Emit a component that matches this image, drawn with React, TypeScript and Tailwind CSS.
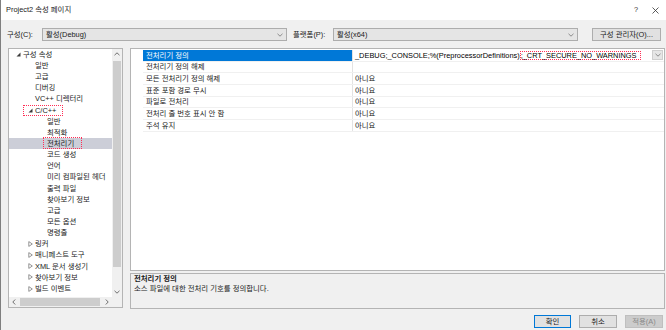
type TreeItem = {
  label: string;
  level: number;
  arrow?: 'open' | 'closed';
  selected?: boolean;
  box?: 'cpp' | 'pre';
};

const tree: TreeItem[] = [
  { label: '구성 속성', level: 0, arrow: 'open' },
  { label: '일반', level: 1 },
  { label: '고급', level: 1 },
  { label: '디버깅', level: 1 },
  { label: 'VC++ 디렉터리', level: 1 },
  { label: 'C/C++', level: 1, arrow: 'open', box: 'cpp' },
  { label: '일반', level: 2 },
  { label: '최적화', level: 2 },
  { label: '전처리기', level: 2, selected: true, box: 'pre' },
  { label: '코드 생성', level: 2 },
  { label: '언어', level: 2 },
  { label: '미리 컴파일된 헤더', level: 2 },
  { label: '출력 파일', level: 2 },
  { label: '찾아보기 정보', level: 2 },
  { label: '고급', level: 2 },
  { label: '모든 옵션', level: 2 },
  { label: '명령줄', level: 2 },
  { label: '링커', level: 1, arrow: 'closed' },
  { label: '매니페스트 도구', level: 1, arrow: 'closed' },
  { label: 'XML 문서 생성기', level: 1, arrow: 'closed' },
  { label: '찾아보기 정보', level: 1, arrow: 'closed' },
  { label: '빌드 이벤트', level: 1, arrow: 'closed' },
];

const props = [
  { name: '전처리기 정의', value: '' },
  { name: '전처리기 정의 해제', value: '' },
  { name: '모든 전처리기 정의 해제', value: '아니요' },
  { name: '표준 포함 경로 무시', value: '아니요' },
  { name: '파일로 전처리', value: '아니요' },
  { name: '전처리 줄 번호 표시 안 함', value: '아니요' },
  { name: '주석 유지', value: '아니요' },
];

const indent = ['pl-[7px]', 'pl-[19px]', 'pl-[31px]'];

function Chevron({ color = '#808080' }: { color?: string }) {
  return (
    <svg width="6" height="4" viewBox="0 0 6 4">
      <polyline points="0.5,0.8 3,3.2 5.5,0.8" fill="none" stroke={color} strokeWidth="0.9" />
    </svg>
  );
}

function Arrow({ kind }: { kind?: 'open' | 'closed' }) {
  if (kind === 'open') {
    return (
      <svg width="5" height="5" viewBox="0 0 5 5">
        <polygon points="4.5,0.5 4.5,4.5 0.5,4.5" fill="#3c3c3c" />
      </svg>
    );
  }
  if (kind === 'closed') {
    return (
      <svg width="5" height="6" viewBox="0 0 5 6">
        <polygon points="0.8,0.6 4.3,3 0.8,5.4" fill="none" stroke="#7a7a7a" strokeWidth="0.8" />
      </svg>
    );
  }
  return null;
}

function ComboBox({ text, width }: { text: string; width: string }) {
  return (
    <div
      className={`${width} flex h-[13px] items-center border border-[#adadad] bg-[#e5e5e5] pl-[3px] pr-[3px]`}
    >
      <span className="flex-1 leading-none">{text}</span>
      <Chevron />
    </div>
  );
}

export default function App() {
  return (
    <div className="flex h-[330px] w-[666px] flex-col overflow-hidden border-l border-[#7f7f7f] bg-[#f0f0f0] font-['Liberation_Sans','Noto_Sans_CJK_KR',sans-serif] text-[7.4px] text-[#1a1a1a]">
      {/* title bar */}
      <div className="flex h-[20px] items-center bg-white pl-[5px]">
        <span className="leading-none">Project2 속성 페이지</span>
        <div className="ml-auto flex items-center">
          <span className="flex w-[20px] justify-center leading-none text-[#333]">?</span>
          <span className="flex w-[20px] justify-center pr-[1px]">
            <svg width="7" height="7" viewBox="0 0 7 7">
              <line x1="0.5" y1="0.5" x2="6.5" y2="6.5" stroke="#333" strokeWidth="0.8" />
              <line x1="6.5" y1="0.5" x2="0.5" y2="6.5" stroke="#333" strokeWidth="0.8" />
            </svg>
          </span>
        </div>
      </div>

      {/* config row */}
      <div className="mt-[8px] flex h-[13px] items-center pl-[6px]">
        <span className="w-[35px] leading-none">구성(C):</span>
        <ComboBox text="활성(Debug)" width="w-[245px]" />
        <span className="ml-[6px] w-[40px] leading-none">플랫폼(P):</span>
        <ComboBox text="활성(x64)" width="w-[245px]" />
        <button
          type="button"
          className="ml-[14px] flex h-[13px] w-[69px] items-center justify-center border border-[#adadad] bg-[#e1e1e1] leading-none"
        >
          구성 관리자(O)...
        </button>
      </div>

      {/* main area */}
      <div className="mt-[7px] flex pl-[7px]">
        {/* tree */}
        <div className="flex h-[260px] w-[115px] flex-col border border-[#b4b4b4] bg-white">
          <div className="flex h-[248px]">
            <div className="flex-1 overflow-hidden">
              {tree.map((item, i) => (
                <div
                  key={i}
                  className={`relative flex h-[11.15px] items-center whitespace-nowrap ${indent[item.level]} ${
                    item.selected ? 'bg-[#ccced8]' : ''
                  }`}
                >
                  <span className="flex w-[7px] items-center">
                    <Arrow kind={item.arrow} />
                  </span>
                  <span className="leading-none">{item.label}</span>
                  {item.box === 'cpp' && (
                    <span className="absolute top-0 bottom-0 left-[14px] w-[40px] border border-dotted border-[#ff2d55]" />
                  )}
                  {item.box === 'pre' && (
                    <span className="absolute top-[-1px] bottom-0 left-[34px] w-[39px] border border-dotted border-[#ff2d55]" />
                  )}
                </div>
              ))}
            </div>
            {/* vertical scrollbar */}
            <div className="flex w-[10px] flex-col bg-[#f0f0f0]">
              <div className="flex h-[10px] items-center justify-center">
                <svg width="6" height="4" viewBox="0 0 6 4">
                  <polyline points="0.5,3.2 3,0.8 5.5,3.2" fill="none" stroke="#606060" strokeWidth="0.9" />
                </svg>
              </div>
              <div className="mx-[1px] mt-[2px] h-[206px] bg-[#cdcdcd]" />
              <div className="mt-auto flex h-[10px] items-center justify-center">
                <Chevron color="#606060" />
              </div>
            </div>
          </div>
          {/* horizontal scrollbar */}
          <div className="flex h-[10px] bg-[#f0f0f0]">
            <div className="flex w-[10px] items-center justify-center">
              <svg width="4" height="6" viewBox="0 0 4 6">
                <polyline points="3.2,0.5 0.8,3 3.2,5.5" fill="none" stroke="#606060" strokeWidth="0.9" />
              </svg>
            </div>
            <div className="my-[1px] ml-[1px] w-[80px] bg-[#cdcdcd]" />
            <div className="ml-auto flex w-[10px] items-center justify-center">
              <svg width="4" height="6" viewBox="0 0 4 6">
                <polyline points="0.8,0.5 3.2,3 0.8,5.5" fill="none" stroke="#606060" strokeWidth="0.9" />
              </svg>
            </div>
            <div className="w-[10px]" />
          </div>
        </div>

        {/* right column */}
        <div className="ml-[7px] flex w-[535px] flex-col">
          <div className="h-[223px] border border-[#b4b4b4] bg-white pt-[1px] pl-[12px]">
            {props.map((p, i) => (
              <div key={i} className="flex h-[11.67px] border-b border-[#f0f0f0]">
                <div
                  className={`flex w-[209px] items-center pl-[3px] ${
                    i === 0 ? 'bg-[#0078d7] text-white' : ''
                  }`}
                >
                  <span className="leading-none">{p.name}</span>
                </div>
                <div className="flex flex-1 items-center border-l border-[#e3e3e3] pl-[2px]">
                  {i === 0 ? (
                    <>
                      <span className="leading-none whitespace-nowrap text-black">
                        _DEBUG;_CONSOLE;%(PreprocessorDefinitions)
                      </span>
                      <span className="flex h-[9px] items-center border border-dotted border-[#ff2d55] pr-[3px] leading-none whitespace-nowrap text-black">
                        ;_CRT_SECURE_NO_WARNINGS
                      </span>
                      <span className="mr-[1px] ml-auto flex h-[10px] w-[11px] items-center justify-center border border-[#cfcfcf] bg-[#e6e6e6]">
                        <Chevron />
                      </span>
                    </>
                  ) : (
                    <span className="leading-none">{p.value}</span>
                  )}
                </div>
              </div>
            ))}
          </div>
          <div className="mt-[2px] h-[36px] border border-[#b4b4b4] bg-[#f0f0f0] pl-[3px]">
            <div className="leading-[10px] font-bold">전처리기 정의</div>
            <div className="leading-[10px]">소스 파일에 대한 전처리 기호를 정의합니다.</div>
          </div>
        </div>
      </div>

      {/* buttons */}
      <div className="mt-[6px] flex justify-end gap-[8px] pr-[3px]">
        <button
          type="button"
          className="flex h-[13px] w-[37px] items-center justify-center border border-[#0078d7] bg-[#e1e1e1] leading-none"
        >
          확인
        </button>
        <button
          type="button"
          className="flex h-[13px] w-[38px] items-center justify-center border border-[#adadad] bg-[#e1e1e1] leading-none"
        >
          취소
        </button>
        <button
          type="button"
          className="flex h-[13px] w-[38px] items-center justify-center border border-[#bfbfbf] bg-[#cccccc] leading-none text-[#8a8a8a]"
        >
          적용(A)
        </button>
      </div>
    </div>
  );
}
